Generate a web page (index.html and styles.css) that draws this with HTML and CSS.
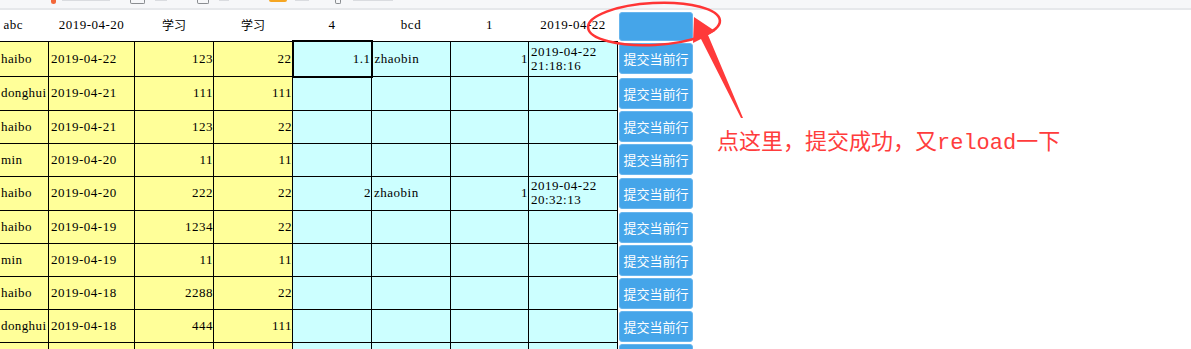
FILE: index.html
```html
<!DOCTYPE html>
<html lang="zh">
<head>
<meta charset="utf-8">
<title>提交</title>
<link rel="stylesheet" href="styles.css">
</head>
<body>
<div class="toolbar">
  <span class="tb dot" style="margin-left:51px"></span>
  <span class="tb txt" style="margin-left:6px;width:48px"></span>
  <span class="tb box" style="margin-left:20px;width:13px"></span>
  <span class="tb txt" style="margin-left:10px;width:12px"></span>
  <span class="tb box" style="margin-left:30px;width:10px"></span>
  <span class="tb txt" style="margin-left:10px;width:10px"></span>
  <span class="tb orange" style="margin-left:40px;width:18px"></span>
  <span class="tb txt" style="margin-left:8px;width:14px"></span>
  <span class="tb box" style="margin-left:26px;width:4px"></span>
  <span class="tb txt" style="margin-left:12px;width:40px"></span>
</div>
<table class="grid">
  <colgroup>
    <col class="c1"><col class="c2"><col class="c3"><col class="c4"><col class="c5"><col class="c6"><col class="c7"><col class="c8"><col class="c9">
  </colgroup>
  <thead>
    <tr class="head">
      <td class="hl">abc</td><td>2019-04-20</td><td class="cjk">学习</td><td class="cjk">学习</td><td>4</td><td>bcd</td><td>1</td><td>2019-04-22</td>
      <td class="btncell top"><button class="btn btn-empty"></button></td>
    </tr>
  </thead>
  <tbody>
    <tr class="tall">
      <td class="y n">haibo</td><td class="y l">2019-04-22</td><td class="y r">123</td><td class="y r">22</td>
      <td class="c r focus">1.1</td><td class="c l gl">zhaobin</td><td class="c r">1</td><td class="c l dt">2019-04-22<br>21:18:16</td>
      <td class="btncell"><button class="btn">提交当前行</button></td>
    </tr>
    <tr>
      <td class="y n">donghui</td><td class="y l">2019-04-21</td><td class="y r">111</td><td class="y r">111</td>
      <td class="c r"></td><td class="c l gl"></td><td class="c r"></td><td class="c l"></td>
      <td class="btncell"><button class="btn">提交当前行</button></td>
    </tr>
    <tr>
      <td class="y n">haibo</td><td class="y l">2019-04-21</td><td class="y r">123</td><td class="y r">22</td>
      <td class="c r"></td><td class="c l gl"></td><td class="c r"></td><td class="c l"></td>
      <td class="btncell"><button class="btn">提交当前行</button></td>
    </tr>
    <tr>
      <td class="y n">min</td><td class="y l">2019-04-20</td><td class="y r">11</td><td class="y r">11</td>
      <td class="c r"></td><td class="c l gl"></td><td class="c r"></td><td class="c l"></td>
      <td class="btncell"><button class="btn">提交当前行</button></td>
    </tr>
    <tr class="tall">
      <td class="y n">haibo</td><td class="y l">2019-04-20</td><td class="y r">222</td><td class="y r">22</td>
      <td class="c r">2</td><td class="c l gl">zhaobin</td><td class="c r">1</td><td class="c l dt">2019-04-22<br>20:32:13</td>
      <td class="btncell"><button class="btn">提交当前行</button></td>
    </tr>
    <tr>
      <td class="y n">haibo</td><td class="y l">2019-04-19</td><td class="y r">1234</td><td class="y r">22</td>
      <td class="c r"></td><td class="c l gl"></td><td class="c r"></td><td class="c l"></td>
      <td class="btncell"><button class="btn">提交当前行</button></td>
    </tr>
    <tr>
      <td class="y n">min</td><td class="y l">2019-04-19</td><td class="y r">11</td><td class="y r">11</td>
      <td class="c r"></td><td class="c l gl"></td><td class="c r"></td><td class="c l"></td>
      <td class="btncell"><button class="btn">提交当前行</button></td>
    </tr>
    <tr>
      <td class="y n">haibo</td><td class="y l">2019-04-18</td><td class="y r">2288</td><td class="y r">22</td>
      <td class="c r"></td><td class="c l gl"></td><td class="c r"></td><td class="c l"></td>
      <td class="btncell"><button class="btn">提交当前行</button></td>
    </tr>
    <tr>
      <td class="y n">donghui</td><td class="y l">2019-04-18</td><td class="y r">444</td><td class="y r">111</td>
      <td class="c r"></td><td class="c l gl"></td><td class="c r"></td><td class="c l"></td>
      <td class="btncell"><button class="btn">提交当前行</button></td>
    </tr>
    <tr>
      <td class="y n"></td><td class="y l"></td><td class="y r"></td><td class="y r"></td>
      <td class="c r"></td><td class="c l gl"></td><td class="c r"></td><td class="c l"></td>
      <td class="btncell"><button class="btn"></button></td>
    </tr>
  </tbody>
</table>

<svg class="mark" width="1191" height="349" viewBox="0 0 1191 349" aria-hidden="true">
  <ellipse cx="654" cy="24" rx="66" ry="21" transform="rotate(-3 654 24)" fill="none" stroke="#ff3535" stroke-width="2.6"/>
  <polygon points="694,17 715,31 708,35 743,118 741,118 701,39 693,43" fill="#ff3a3a"/>
</svg>
<div class="note">点这里，提交成功，又reload一下</div>
</body>
</html>
```

FILE: styles.css
```css
html, body {
  margin: 0;
  padding: 0;
  background: #ffffff;
  overflow: hidden;
}

body {
  width: 1191px;
  height: 349px;
  position: relative;
  font-family: "Liberation Serif", "Noto Sans CJK SC", serif;
  font-size: 13px;
  color: #000;
}

.toolbar {
  height: 8px;
  background: #f6f7f9;
  border-bottom: 2px solid #e6e8eb;
  display: flex;
  align-items: flex-start;
  overflow: hidden;
}

.tb {
  display: block;
  flex: none;
}
.tb.dot {
  width: 5px;
  height: 4px;
  border-radius: 0 0 3px 3px;
  background: #f3673a;
}
.tb.txt {
  height: 1px;
  background: #dadce0;
}
.tb.box {
  height: 3px;
  border: 1px solid #8a8d91;
  border-top: none;
  border-radius: 0 0 2px 2px;
}
.tb.orange {
  height: 2px;
  background: #f5a623;
  border-radius: 0 0 2px 2px;
}

.grid {
  border-collapse: collapse;
  table-layout: fixed;
  width: 694px;
  margin-left: -1px;
  letter-spacing: 0.5px;
}

.c1 { width: 49px; }
.c2 { width: 86px; }
.c3 { width: 79px; }
.c4 { width: 79px; }
.c5 { width: 79px; }
.c6 { width: 79px; }
.c7 { width: 78px; }
.c8 { width: 89px; }
.c9 { width: 76px; }

.grid td {
  padding: 0;
  white-space: nowrap;
  overflow: hidden;
  vertical-align: middle;
}

.head td {
  height: 29px;
  text-align: center;
  border: none;
}
.head td.hl {
  text-align: left;
  padding-left: 4px;
}
.head td.cjk {
  font-size: 12px;
  letter-spacing: 0;
}

tbody tr td {
  height: 32px;
  border: 1px solid #000;
}
tbody tr.tall td {
  height: 33.5px;
}

.y { background: #ffff99; }
.c { background: #ccffff; }
.l { text-align: left; padding-left: 2px !important; }
.n { text-align: left; padding-left: 1px !important; letter-spacing: 0.4px; }
.r { text-align: right; }
.gl { border-left-color: #4a5555 !important; }
.dt { line-height: 14px; }

.focus {
  border: 2px solid #000 !important;
}

.grid td.btncell {
  border: none;
  background: transparent;
  padding: 0 0 0 1px;
  vertical-align: middle;
  overflow: visible;
}
.grid td.btncell.top {
  vertical-align: top;
}

.btn {
  display: block;
  width: 74px;
  height: 31px;
  margin: 0;
  padding: 0;
  border: 1px solid #68b6ee;
  border-radius: 3px;
  background: #45a5e9;
  color: #ffffff;
  font-family: "Noto Sans CJK SC", sans-serif;
  font-size: 13px;
  letter-spacing: 0;
  line-height: 29px;
  text-align: center;
}
.btn-empty {
  height: 29px;
  margin-top: 2px;
}

.mark {
  position: absolute;
  left: 0;
  top: 0;
  pointer-events: none;
}

.note {
  position: absolute;
  left: 717px;
  top: 131px;
  font-family: "Liberation Mono", "Noto Sans CJK SC", monospace;
  font-size: 22px;
  line-height: 26px;
  color: #ff3c3c;
  white-space: nowrap;
}
```
